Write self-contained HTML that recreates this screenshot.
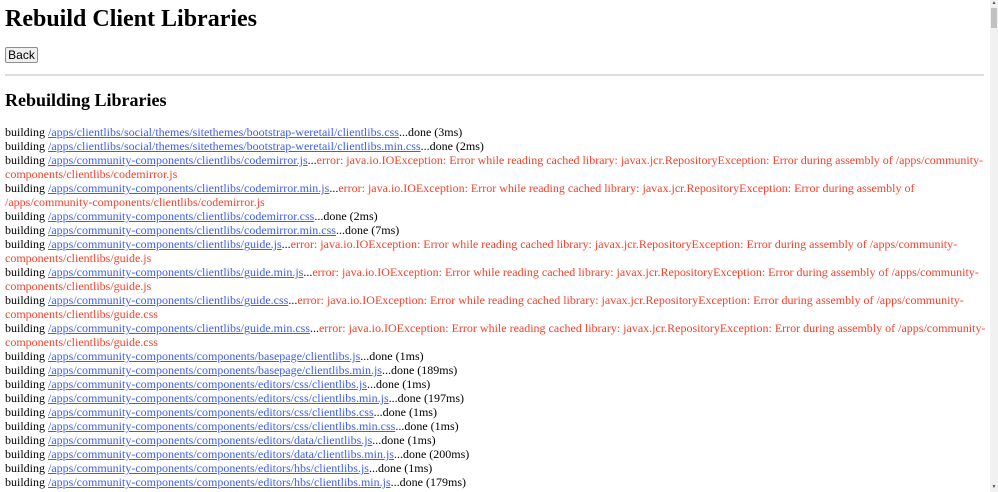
<!DOCTYPE html>
<html><head><meta charset="utf-8"><style>
html,body{margin:0;padding:0;background:#fff;width:998px;height:492px;overflow:hidden}
body{font-family:"Liberation Serif",serif;color:#000;position:relative}
h1{position:absolute;left:5px;top:4px;margin:0;font-size:24px;line-height:30px;font-weight:bold}
.btn{position:absolute;left:5px;top:47px;width:31px;height:14px;font-family:"Liberation Sans",sans-serif;font-size:12px;line-height:14px;text-align:center;background:#efefef;border:1px solid #8f8f8f;border-radius:2px;color:#000}
.hr{position:absolute;left:5px;top:74px;width:979px;height:2px;background:#dcdcdc}
h2{position:absolute;left:5px;top:89px;margin:0;font-size:18px;line-height:22px;font-weight:bold}
.log{position:absolute;left:5px;top:125px;width:982px;font-size:12px;line-height:14px}
a{color:#3f5fe0;text-decoration:underline}
.e{color:#e8452f}
.sb{position:absolute;right:0;top:0;width:8px;height:492px;background:#f1f1f1}
.th{position:absolute;right:1px;top:8px;width:6px;height:20px;background:#c1c1c1}
.ar{position:absolute;right:1px;width:6px;font-size:5px;line-height:6px;color:#555;text-align:center}
</style></head><body>
<h1>Rebuild Client Libraries</h1>
<div class="btn">Back</div>
<div class="hr"></div>
<h2>Rebuilding Libraries</h2>
<div class="log">
building <a>/apps/clientlibs/social/themes/sitethemes/bootstrap-weretail/clientlibs.css</a>...done (3ms)<br>
building <a>/apps/clientlibs/social/themes/sitethemes/bootstrap-weretail/clientlibs.min.css</a>...done (2ms)<br>
building <a>/apps/community-components/clientlibs/codemirror.js</a>...<span class="e">error: java.io.IOException: Error while reading cached library: javax.jcr.RepositoryException: Error during assembly of /apps/community-components/clientlibs/codemirror.js</span><br>
building <a>/apps/community-components/clientlibs/codemirror.min.js</a>...<span class="e">error: java.io.IOException: Error while reading cached library: javax.jcr.RepositoryException: Error during assembly of /apps/community-components/clientlibs/codemirror.js</span><br>
building <a>/apps/community-components/clientlibs/codemirror.css</a>...done (2ms)<br>
building <a>/apps/community-components/clientlibs/codemirror.min.css</a>...done (7ms)<br>
building <a>/apps/community-components/clientlibs/guide.js</a>...<span class="e">error: java.io.IOException: Error while reading cached library: javax.jcr.RepositoryException: Error during assembly of /apps/community-components/clientlibs/guide.js</span><br>
building <a>/apps/community-components/clientlibs/guide.min.js</a>...<span class="e">error: java.io.IOException: Error while reading cached library: javax.jcr.RepositoryException: Error during assembly of /apps/community-components/clientlibs/guide.js</span><br>
building <a>/apps/community-components/clientlibs/guide.css</a>...<span class="e">error: java.io.IOException: Error while reading cached library: javax.jcr.RepositoryException: Error during assembly of /apps/community-components/clientlibs/guide.css</span><br>
building <a>/apps/community-components/clientlibs/guide.min.css</a>...<span class="e">error: java.io.IOException: Error while reading cached library: javax.jcr.RepositoryException: Error during assembly of /apps/community-components/clientlibs/guide.css</span><br>
building <a>/apps/community-components/components/basepage/clientlibs.js</a>...done (1ms)<br>
building <a>/apps/community-components/components/basepage/clientlibs.min.js</a>...done (189ms)<br>
building <a>/apps/community-components/components/editors/css/clientlibs.js</a>...done (1ms)<br>
building <a>/apps/community-components/components/editors/css/clientlibs.min.js</a>...done (197ms)<br>
building <a>/apps/community-components/components/editors/css/clientlibs.css</a>...done (1ms)<br>
building <a>/apps/community-components/components/editors/css/clientlibs.min.css</a>...done (1ms)<br>
building <a>/apps/community-components/components/editors/data/clientlibs.js</a>...done (1ms)<br>
building <a>/apps/community-components/components/editors/data/clientlibs.min.js</a>...done (200ms)<br>
building <a>/apps/community-components/components/editors/hbs/clientlibs.js</a>...done (1ms)<br>
building <a>/apps/community-components/components/editors/hbs/clientlibs.min.js</a>...done (179ms)<br>
</div>
<div class="sb"><div class="ar" style="top:1px">▲</div><div class="th"></div><div class="ar" style="bottom:1px">▼</div></div>
</body></html>
